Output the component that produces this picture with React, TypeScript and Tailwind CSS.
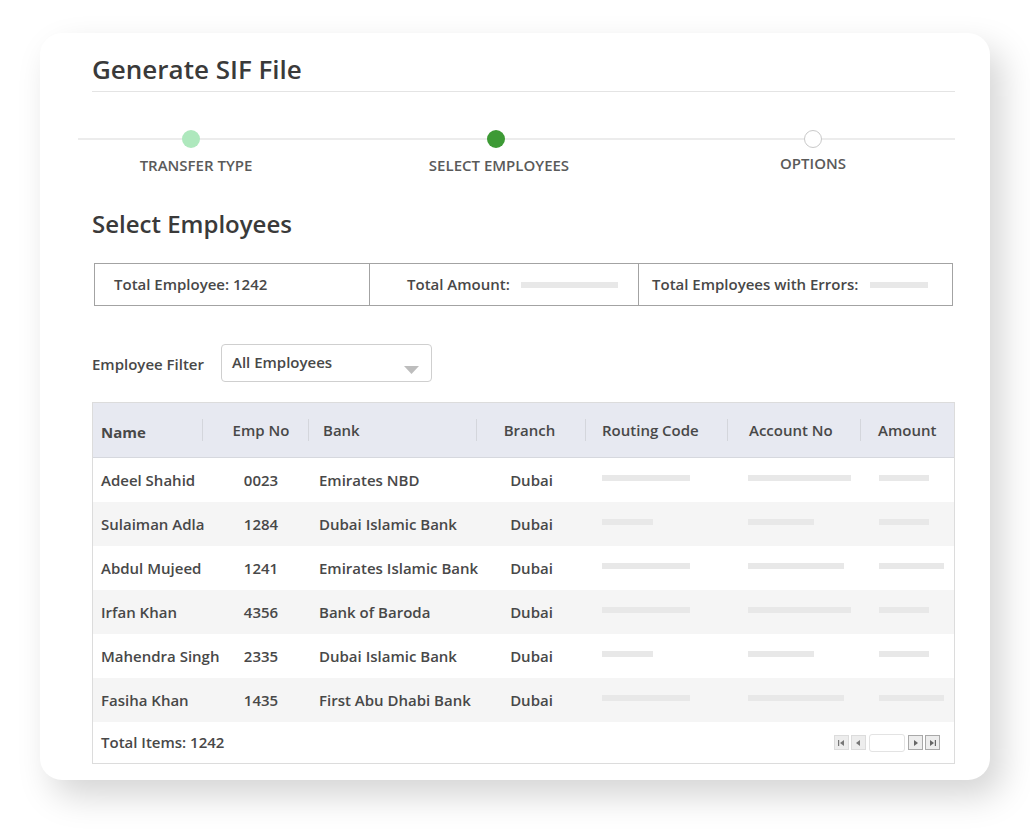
const rows = [
  { name: 'Adeel Shahid', no: '0023', bank: 'Emirates NBD', branch: 'Dubai', r: 88, a: 103, m: 50 },
  { name: 'Sulaiman Adla', no: '1284', bank: 'Dubai Islamic Bank', branch: 'Dubai', r: 51, a: 66, m: 50 },
  { name: 'Abdul Mujeed', no: '1241', bank: 'Emirates Islamic Bank', branch: 'Dubai', r: 88, a: 96, m: 65 },
  { name: 'Irfan Khan', no: '4356', bank: 'Bank of Baroda', branch: 'Dubai', r: 88, a: 103, m: 50 },
  { name: 'Mahendra Singh', no: '2335', bank: 'Dubai Islamic Bank', branch: 'Dubai', r: 51, a: 66, m: 50 },
  { name: 'Fasiha Khan', no: '1435', bank: 'First Abu Dhabi Bank', branch: 'Dubai', r: 88, a: 96, m: 65 },
]

const cols = 'grid grid-cols-[109px_106px_168px_109px_142px_133px_1fr]'

function Sep() {
  return <span className="w-px h-[22px] bg-[#d4d6dc] flex-shrink-0" />
}

function Bar({ w }: { w: number }) {
  return <span className="block h-[6px] bg-[#e8e8e8]" style={{ width: w }} />
}

function Step({ label, state, width, shift }: { label: string; state: 'done' | 'active' | 'todo'; width: string; shift: string }) {
  const dot =
    state === 'done' ? 'bg-[#aee8bd]' : state === 'active' ? 'bg-[#3d9a35]' : 'bg-white border border-[#c9c9c9]'
  return (
    <div className={`${width} flex flex-col items-center`}>
      <span className={`w-[18px] h-[18px] rounded-full ${dot}`} />
      <span className={`${state === 'todo' ? 'mt-[5px]' : 'mt-[7px]'} ${shift} text-[15px] leading-5 font-semibold text-[#5a5a5a] uppercase`}>{label}</span>
    </div>
  )
}

export default function App() {
  return (
    <div className="w-[1030px] h-[834px] bg-white pt-[33px] pl-[40px]" style={{ fontFamily: '"Open Sans", sans-serif' }}>
      <div className="w-[950px] h-[747px] bg-white rounded-[22px] shadow-[12px_16px_34px_rgba(0,0,0,0.17)] pl-[52px] pr-[35px] pt-[19px] text-[#484848]">

        <h1 className="text-[26px] leading-[34px] font-semibold text-[#3a3a3a]">Generate SIF File</h1>
        <div className="mt-[5px] border-b border-[#e4e4e4]" />

        <div className="mt-[38px] -ml-[14px] relative">
          <div className="absolute left-0 right-0 top-[8px] h-[2px] bg-[#ececec]" />
          <div className="relative flex">
            <Step label="Transfer Type" state="done" width="w-[226px]" shift="ml-[10px]" />
            <Step label="Select Employees" state="active" width="w-[384px]" shift="ml-[6px]" />
            <Step label="Options" state="todo" width="w-[250px]" shift="ml-0" />
          </div>
        </div>

        <h2 className="mt-[33px] text-[24px] leading-[32px] font-semibold text-[#3a3a3a]">Select Employees</h2>

        <div className="mt-[23px] mx-[2px] h-[43px] border border-[#a3a3a3] flex text-[15px] font-semibold">
          <div className="w-[275px] border-r border-[#a3a3a3] flex items-center pl-[19px]">Total Employee: 1242</div>
          <div className="w-[269px] border-r border-[#a3a3a3] flex items-center pl-[37px] gap-[11px]">
            <span>Total Amount:</span>
            <Bar w={97} />
          </div>
          <div className="flex-1 flex items-center pl-[13px] gap-[12px]">
            <span>Total Employees with Errors:</span>
            <Bar w={58} />
          </div>
        </div>

        <div className="mt-[38px] flex items-center gap-[17px]">
          <span className="text-[15px] font-semibold mt-[2px]">Employee Filter</span>
          <div className="w-[211px] h-[38px] border border-[#cfcfcf] rounded-[4px] flex justify-between pl-[10px] pr-[12px] pt-[7px]">
            <span className="text-[15px] leading-5 font-semibold">All Employees</span>
            <svg width="15" height="8" viewBox="0 0 15 8" className="mt-[14px]">
              <path d="M0 0 L15 0 L7.5 8 Z" fill="#bdbdbd" />
            </svg>
          </div>
        </div>

        <div className="mt-[20px] border border-[#dcdcdc] text-[15px] font-semibold">
          <div className={`${cols} h-[55px] bg-[#e7e9f1] border-b border-[#d6d8de] items-center`}>
            <div className="flex items-center pl-[8px] pt-[4px] font-bold">
              <span className="flex-1">Name</span>
            </div>
            <div className="flex items-center">
              <Sep />
              <span className="flex-1 text-center pl-[11px]">Emp No</span>
            </div>
            <div className="flex items-center">
              <Sep />
              <span className="flex-1 pl-[14px]">Bank</span>
            </div>
            <div className="flex items-center">
              <Sep />
              <span className="flex-1 text-center pr-[3px]">Branch</span>
            </div>
            <div className="flex items-center">
              <Sep />
              <span className="flex-1 pl-[16px]">Routing Code</span>
            </div>
            <div className="flex items-center">
              <Sep />
              <span className="flex-1 pl-[21px]">Account No</span>
            </div>
            <div className="flex items-center">
              <Sep />
              <span className="flex-1 pl-[17px]">Amount</span>
            </div>
          </div>

          {rows.map((r, i) => (
            <div key={r.no + r.name} className={`${cols} h-[44px] items-center ${i % 2 === 1 ? 'bg-[#f5f5f5]' : 'bg-white'}`}>
              <span className="pl-[8px] whitespace-nowrap">{r.name}</span>
              <span className="text-center pl-[12px]">{r.no}</span>
              <span className="pl-[11px] whitespace-nowrap">{r.bank}</span>
              <span className="text-center pl-[2px]">{r.branch}</span>
              <span className="pl-[17px] -mt-[4px]"><Bar w={r.r} /></span>
              <span className="pl-[21px] -mt-[4px]"><Bar w={r.a} /></span>
              <span className="pl-[19px] -mt-[4px]"><Bar w={r.m} /></span>
            </div>
          ))}

          <div className="h-[41px] flex items-center justify-between pl-[8px] pr-[14px]">
            <span>Total Items: 1242</span>
            <div className="flex items-center gap-[2px]">
              <button className="w-[15px] h-[15px] bg-[#ededed] border border-[#dcdcdc] flex items-center justify-center">
                <svg width="7" height="6" viewBox="0 0 7 6"><rect x="0" y="0" width="1.2" height="6" fill="#777" /><path d="M6 0 L2 3 L6 6 Z" fill="#777" /></svg>
              </button>
              <button className="w-[15px] h-[15px] bg-[#ededed] border border-[#dcdcdc] flex items-center justify-center">
                <svg width="5" height="6" viewBox="0 0 5 6"><path d="M4 0 L0 3 L4 6 Z" fill="#777" /></svg>
              </button>
              <span className="mx-[1px] w-[36px] h-[18px] bg-white border border-[#e3e3e3] rounded-[3px]" />
              <button className="w-[15px] h-[15px] bg-[#ededed] border border-[#a9a9a9] flex items-center justify-center">
                <svg width="5" height="6" viewBox="0 0 5 6"><path d="M1 0 L5 3 L1 6 Z" fill="#666" /></svg>
              </button>
              <button className="w-[15px] h-[15px] bg-[#ededed] border border-[#a9a9a9] flex items-center justify-center">
                <svg width="7" height="6" viewBox="0 0 7 6"><path d="M1 0 L5 3 L1 6 Z" fill="#666" /><rect x="5.8" y="0" width="1.2" height="6" fill="#666" /></svg>
              </button>
            </div>
          </div>
        </div>

      </div>
    </div>
  )
}
